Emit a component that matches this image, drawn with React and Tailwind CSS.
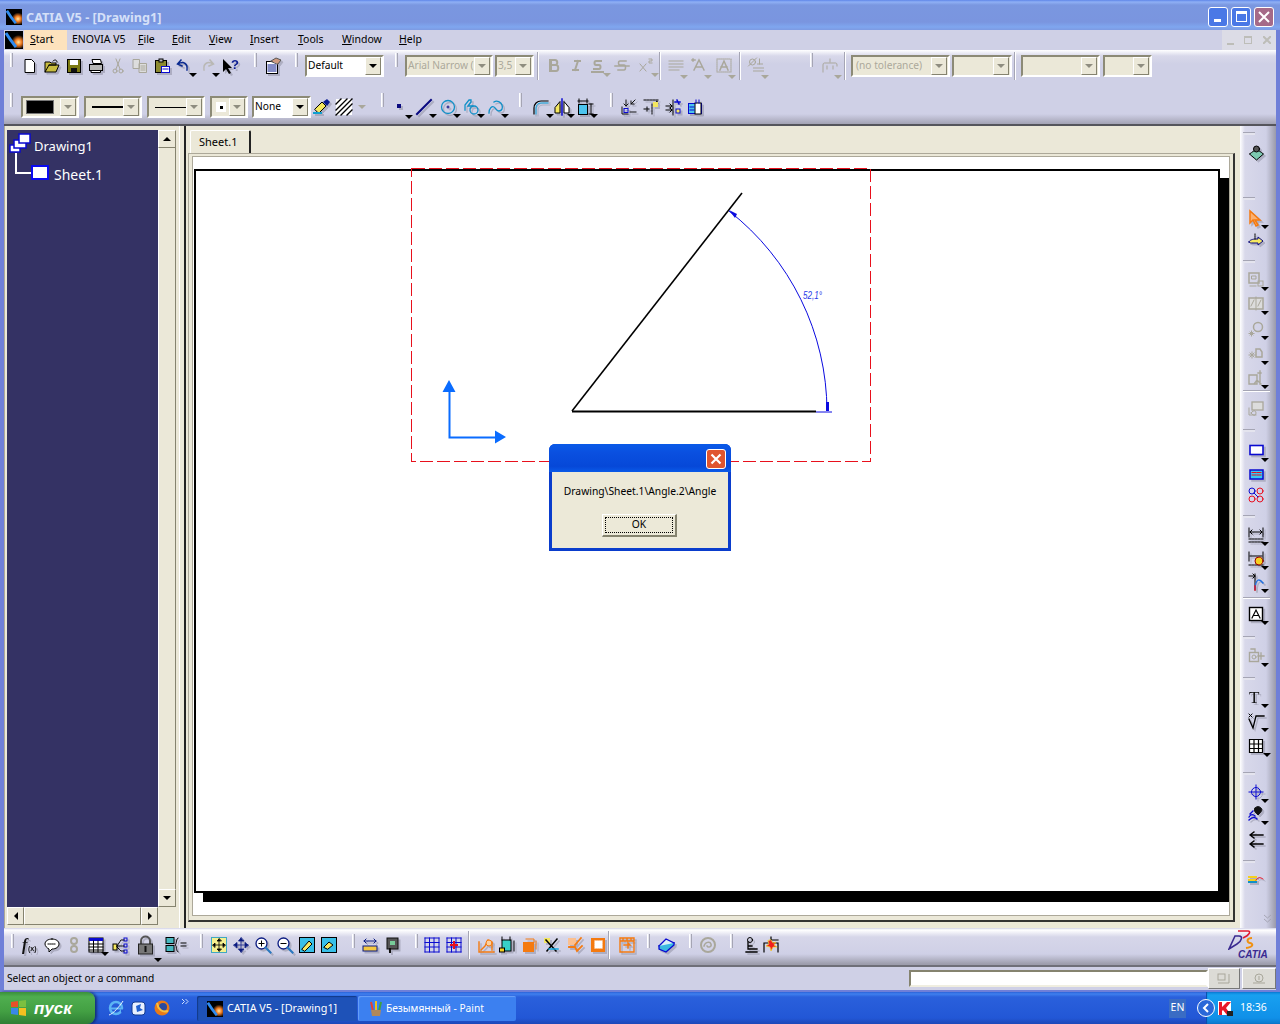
import React from 'react'

const G = '#a9a79b'
const B = '#0a0ad0'
const O = '#f47a10'

// toolbar slot, the svg inside is drawn on a 16x16 grid
const Tool = ({ className = 'w-[16px]', arrow, arrowClass = '-right-[5px] -bottom-[3px]', vb = '0 0 16 16', flat, dim, children }) => (
  <div className={`relative shrink-0 h-[16px] ${className}`}>
    <svg viewBox={vb} className={`w-full h-full overflow-visible ${flat ? '' : 'drop-shadow-[2px_2px_0_rgba(110,110,125,0.35)]'}`} fill="none" strokeLinecap="square">
      {children}
    </svg>
    {arrow && <Arrow className={`absolute ${arrowClass} ${dim ? 'border-t-[#a9a79b]' : 'border-t-black'}`} />}
  </div>
)

const Arrow = ({ className = '' }) => (
  <span className={`block w-0 h-0 border-x-[4px] border-x-transparent border-t-[4px] ${className}`} />
)

const Grip = ({ className = 'mb-[12px]' }) => (
  <div className={`shrink-0 w-[3px] h-[14px] bg-[#e4e4ee] border-x border-x-white border-r-[#a5a5b4] ${className}`} />
)
const Sep = ({ className = '' }) => (
  <div className={`shrink-0 w-[2px] h-[28px] bg-white border-l border-[#a5a5b4] ${className}`} />
)
const HGrip = ({ className = '' }) => (
  <div className={`shrink-0 -ml-[5px] w-[12px] h-[3px] bg-[#e4e4ee] border-t border-[#a5a5b4] ${className}`} />
)

const Combo = ({ className = '', white, dim, text, children }) => (
  <div className={`shrink-0 h-[22px] flex items-center border-2 border-[#8c8a76] border-r-white border-b-white ${white ? 'bg-white' : 'bg-[#ebe8d8]'} ${className}`}>
    <div className={`flex-1 min-w-0 flex items-center overflow-hidden whitespace-nowrap pl-[1px] text-[10.2px] ${dim ? 'text-[#aba99b]' : 'text-black'}`}>
      {text}{children}
    </div>
    <div className="shrink-0 w-[16px] h-[18px] mr-[1px] flex items-center justify-center bg-[#ebe8d8] border border-white border-r-[#85836f] border-b-[#85836f]">
      <Arrow className={dim ? 'border-t-[#8f8d80]' : 'border-t-black'} />
    </div>
  </div>
)

const Logo = ({ className = '' }) => (
  <svg viewBox="0 0 18 18" className={className}>
    <defs>
      <radialGradient id="comet" cx="0.65" cy="0.55" r="0.55">
        <stop offset="0" stopColor="#ffe9a0" />
        <stop offset="0.45" stopColor="#f07a20" />
        <stop offset="1" stopColor="#000" />
      </radialGradient>
    </defs>
    <rect width="18" height="18" fill="#000" />
    <rect x="5" y="4" width="13" height="13" fill="url(#comet)" />
    <path d="M1 2C4 7 7 11 11 16" stroke="#2f8cf0" strokeWidth="3" fill="none" />
  </svg>
)

const MenuItem = ({ className, u, rest }) => (
  <div className={`shrink-0 text-[10.5px] text-black ${className}`}>
    <span className="underline">{u}</span>{rest}
  </div>
)

function TitleBar() {
  return (
    <div className="h-[30px] shrink-0 pt-[3px] flex items-center bg-[linear-gradient(#5f86e8_0,#8fb0f5_2px,#7a97e0_5px,#7a95df_22px,#7fa6ef_27px,#7d9ae2_30px)]">
      <Logo className="ml-[6px] mt-[1px] w-[16px] h-[16px]" />
      <div className="ml-[4px] mt-[2px] text-[12.7px] font-bold text-[#d5e0f8]">CATIA V5 - [Drawing1]</div>
      <div className="ml-auto mr-[6px] flex gap-[3px]">
        <div className="w-[20px] h-[20px] rounded-[3px] border border-white bg-[#4a78e6] flex items-end pb-[4px] pl-[5px]">
          <div className="w-[7px] h-[3px] bg-white" />
        </div>
        <div className="w-[20px] h-[20px] rounded-[3px] border border-white bg-[#4a78e6] flex items-center justify-center">
          <div className="w-[11px] h-[11px] border border-white border-t-[3px]" />
        </div>
        <div className="w-[20px] h-[20px] rounded-[3px] border border-white bg-[#a56a88] flex items-center justify-center">
          <svg viewBox="0 0 12 12" className="w-[12px] h-[12px]"><path d="M1 1l10 10M11 1L1 11" stroke="#fff" strokeWidth="2" /></svg>
        </div>
      </div>
    </div>
  )
}

function MenuBar() {
  return (
    <div className="h-[20px] shrink-0 flex items-center bg-[#cfd0e6]">
      <Logo className="ml-[1px] w-[18px] h-[18px]" />
      <div className="ml-[1px] w-[43px] h-full flex items-center pl-[6px] bg-[#fde2bd] text-[10.5px]">
        <span><span className="underline">S</span>tart</span>
      </div>
      <div className="shrink-0 ml-[5px] w-[66px] text-[10.5px]">ENOVIA V5</div>
      <MenuItem className="w-[34px]" u="F" rest="ile" />
      <MenuItem className="w-[37px]" u="E" rest="dit" />
      <MenuItem className="w-[41px]" u="V" rest="iew" />
      <MenuItem className="w-[48px]" u="I" rest="nsert" />
      <MenuItem className="w-[44px]" u="T" rest="ools" />
      <MenuItem className="w-[57px]" u="W" rest="indow" />
      <MenuItem className="w-[40px]" u="H" rest="elp" />
      <div className="ml-auto h-full w-[54px] flex items-center justify-around bg-[#dcdce6] text-[#bdbdb8]">
        <div className="w-[7px] h-[2px] mt-[7px] bg-[#bdbdb8]" />
        <div className="w-[8px] h-[8px] border border-[#bdbdb8] border-t-2" />
        <svg viewBox="0 0 8 8" className="w-[8px] h-[8px]"><path d="M0 0l8 8M8 0L0 8" stroke="#bdbdb8" strokeWidth="2" /></svg>
      </div>
    </div>
  )
}

function ToolRowOne() {
  return (
    <div className="h-[32px] flex items-center">
      <Grip className="ml-[6px] mb-[12px]" />
      <Tool className="ml-[9px] w-[16px]"><path d="M3.5 1.5h6l3 3v10h-9z" fill="#fff" stroke="#000" /></Tool>
      <Tool className="ml-[6px] w-[16px]"><path d="M1 14V4h5l1 1h5v2H5L1 14h11l3-7H5" fill="#c8bd40" stroke="#000" /><path d="M9 3c2-2 4-1 4 1" stroke="#000" /></Tool>
      <Tool className="ml-[6px] w-[16px]"><rect x="1.5" y="1.5" width="13" height="13" fill="#7c7a12" stroke="#000" /><rect x="4" y="2" width="8" height="5" fill="#fff" /><rect x="5" y="10" width="6" height="4" fill="#111" /></Tool>
      <Tool className="ml-[6px] w-[16px]"><path d="M4.5 1.5h8l1 4h-8z" fill="#fff" stroke="#000" /><rect x="1.5" y="6.5" width="13" height="6" fill="#b8b8b8" stroke="#000" /><path d="M3.5 12.5h9v2h-9z" fill="#fff" stroke="#000" /></Tool>
      <Tool flat className="ml-[6px] w-[16px]"><circle cx="5" cy="13" r="2" stroke={G} /><circle cx="11" cy="13" r="2" stroke={G} /><path d="M6 11L10 1M10 11L6 1" stroke={G} /></Tool>
      <Tool flat className="ml-[6px] w-[16px]"><path d="M1.5 1.5h6v9h-6zM7.5 5.5h7v9h-7z" fill="#ddd" stroke={G} /><path d="M9 8h4M9 10h4M9 12h4" stroke={G} /></Tool>
      <Tool className="ml-[6px] w-[16px]"><rect x="1.5" y="2.5" width="11" height="12" fill="#8c8a30" stroke="#000" /><rect x="5" y="1" width="4" height="3" fill="#bbb" stroke="#000" /><rect x="7.5" y="8.5" width="8" height="6" fill="#fff" stroke={B} /><path d="M9 11h5" stroke={B} /></Tool>
      <Tool arrow className="ml-[6px] w-[16px]"><path d="M5 2L1.5 6 6 8M2 6c5-3 10-1 9 6" stroke="#0a2a90" strokeWidth="1.5" /></Tool>
      <Tool arrow flat className="ml-[7px] w-[16px]"><path d="M11 2l3.5 4L10 8M14 6C9 3 4 5 5 12" stroke="#b9b8b4" strokeWidth="1.5" /></Tool>
      <Tool className="ml-[7px] w-[18px]" vb="0 0 18 16">
        <path d="M1 1v13l3-3 3 5 2-1-3-5h4z" fill="#000" />
        <text x="9" y="11" fontSize="13" fontWeight="700" fill="#0a1a90" fontFamily="Liberation Sans, sans-serif">?</text>
      </Tool>
      <Grip className="ml-[14px] mb-[12px]" />
      <Tool className="ml-[8px] w-[17px]" vb="0 0 17 16"><rect x="1.5" y="3.5" width="11" height="12" fill="#fff" stroke="#000" /><path d="M3 7h8M3 9h8M3 11h8M3 13h8" stroke="#0a1a90" /><path d="M6 3l5-3 5 2-3 4z" fill="#d09a80" stroke="#555" /></Tool>
      <Grip className="ml-[13px] mb-[12px]" />
      <Combo white className="ml-[7px] w-[79px]" text="Default" />
      <Grip className="ml-[11px] mb-[12px]" />
      <Combo dim className="ml-[7px] w-[88px]" text="Arial Narrow (" />
      <Combo dim className="ml-[2px] w-[39px]" text="3,5" />
      <Sep className="ml-[3px]" />
      <Tool flat className="ml-[7px] w-[16px]"><path d="M4 2h5c3 0 3 5 0 5H4zM4 7h6c3 0 3 6 0 6H4zM5 2v11" stroke={G} strokeWidth="2" /></Tool>
      <Tool flat className="ml-[6px] w-[16px]"><path d="M7 3h5M5 12h5M10 3L7 12" stroke={G} strokeWidth="2" /></Tool>
      <Tool flat arrow dim className="ml-[6px] w-[16px]"><path d="M11 3H6C4 3 4 7 6 7h3c2 0 2 4 0 4H4M2 14h11" stroke={G} strokeWidth="2" /></Tool>
      <Tool flat className="ml-[8px] w-[16px]"><path d="M12 3H6C4 3 4 7 6 7h4c2 0 2 5 0 5H4M1 8h14" stroke={G} strokeWidth="1.5" /></Tool>
      <Tool flat arrow dim className="ml-[8px] w-[16px]"><path d="M2 6l6 7M8 6l-6 7M11 1h3v2h-3v2h3" stroke={G} /></Tool>
      <Sep className="ml-[5px]" />
      <Tool flat arrow dim arrowClass="right-[-4px] bottom-[-5px]" className="ml-[7px] w-[16px]"><path d="M1 3h14M1 6h14M1 9h14M1 12h10" stroke={G} /></Tool>
      <Tool flat arrow dim arrowClass="right-[-4px] bottom-[-5px]" className="ml-[8px] w-[16px]"><path d="M2 12L7 2l5 10M4 9h6M0 2h3M1 1v2" stroke={G} strokeWidth="1.5" /></Tool>
      <Tool flat arrow dim arrowClass="right-[-4px] bottom-[-5px]" className="ml-[8px] w-[16px]"><rect x="1" y="1" width="14" height="13" stroke={G} strokeDasharray="1 1" /><path d="M4 12L8 3l4 9M5 9h6" stroke={G} strokeWidth="1.5" /></Tool>
      <Sep className="ml-[7px]" />
      <Tool flat arrow dim arrowClass="right-[-4px] bottom-[-5px]" className="ml-[7px] w-[17px]"><circle cx="4" cy="4" r="3" stroke={G} /><path d="M0 8L8 0M11 1v5M9 6h5M5 10h10M5 13h10" stroke={G} /></Tool>
      <Grip className="ml-[45px] mb-[12px]" />
      <Tool flat arrow dim arrowClass="right-[-4px] bottom-[-5px]" className="ml-[9px] w-[16px]"><path d="M1 14V7c0-2 1-2 2-2h10c1 0 2 0 2 2v1M5 8v3M11 8v3M8 1v3" stroke={G} /></Tool>
      <Sep className="ml-[6px]" />
      <Combo dim className="ml-[5px] w-[99px] pl-[2px]" text="(no tolerance)" />
      <Combo dim className="ml-[2px] w-[60px]" />
      <Sep className="ml-[2px]" />
      <Combo dim className="ml-[5px] w-[79px]" />
      <Combo dim className="ml-[3px] w-[49px]" />
    </div>
  )
}

function ToolRowTwo() {
  return (
    <div className="h-[30px] mt-[10px] flex items-center">
      <Grip className="ml-[6px] mb-[14px]" />
      <Combo dim className="ml-[8px] w-[58px]"><div className="ml-[2px] w-[28px] h-[14px] bg-black border border-[#777]" /></Combo>
      <Combo dim className="ml-[5px] w-[58px]"><div className="ml-[5px] w-[33px] h-[2px] bg-black" /></Combo>
      <Combo dim className="ml-[5px] w-[58px]"><div className="ml-[5px] w-[33px] h-px bg-black" /></Combo>
      <Combo dim className="ml-[5px] w-[38px]"><div className="ml-[3px] w-[10px] h-[10px] bg-white flex items-center justify-center"><div className="w-[3px] h-[3px] bg-black" /></div></Combo>
      <Combo white className="ml-[4px] w-[59px]" text="None" />
      <Tool className="ml-[3px] w-[17px]" vb="0 0 17 16"><path d="M1 10l7-7 4 4-7 7z" fill="#f5e860" stroke="#000" /><path d="M9 3l4-3 3 3-3 4z" fill="#0a1a90" /><path d="M0 14h7" stroke="#10a0d0" strokeWidth="2" /></Tool>
      <Tool flat className="ml-[5px] w-[16px]"><rect width="16" height="16" fill="#fff" /><path d="M0 5L5 0M0 11L11 0M0 16L16 0M5 16L16 5M11 16l5-5" stroke="#000" strokeWidth="1.3" /></Tool>
      <Arrow className="ml-[6px] shrink-0 border-t-[#a9a79b]" />
      <Grip className="ml-[15px] mb-[14px]" />
      <Tool arrow arrowClass="-right-[3px] -bottom-[4px]" className="ml-[10px] w-[16px]"><rect x="3" y="5" width="4" height="4" fill="#0a0a80" /></Tool>
      <Tool arrow className="ml-[6px] w-[16px]"><path d="M1 15L15 1" stroke="#0a0a80" strokeWidth="2" /></Tool>
      <Tool arrow className="ml-[8px] w-[16px]"><circle cx="8" cy="8" r="6.5" stroke="#1090c8" strokeWidth="1.3" /><path d="M7 8h2M8 7v2" stroke="#0a0a80" /></Tool>
      <Tool arrow className="ml-[8px] w-[16px]"><path d="M1 11V6l4-5h2v2L4 7h5" stroke="#1090c8" strokeWidth="1.3" /><circle cx="10" cy="11" r="4" stroke="#1090c8" strokeWidth="1.3" /></Tool>
      <Tool arrow className="ml-[8px] w-[16px]"><path d="M1 14c0-5 3-7 5-6s2 4 5 4 4-3 3-6-5-5-8-3" stroke="#1090c8" strokeWidth="1.3" /></Tool>
      <Grip className="ml-[15px] mb-[14px]" />
      <Tool arrow className="ml-[11px] w-[16px]"><path d="M1 15V9c0-4 3-7 7-7h7" stroke="#000" strokeWidth="1.2" /><path d="M3 15V9c0-3 2-5 5-5h7" stroke="#10a8e0" /></Tool>
      <Tool arrow className="ml-[5px] w-[16px]"><path d="M6 3v11H1V9z" fill="#f5e860" stroke="#000" /><path d="M10 3v11h5V9z" fill="#fff" stroke="#000" /><path d="M8 0v16" stroke={B} strokeWidth="1.5" /></Tool>
      <Tool arrow className="ml-[7px] w-[16px]"><rect x="1.5" y="5.5" width="9" height="10" fill="#4cc4ee" stroke="#000" /><path d="M1 2h10M2 0v4M10 0v4M14 5v10M12 5h4M12 15h4" stroke="#000" /></Tool>
      <Grip className="ml-[17px] mb-[14px]" />
      <Tool className="ml-[8px] w-[16px]"><path d="M1 8v7h6M5 1v6M3 5l2 2 2-2M14 1l-4 4M10 2v3h3M9 13h6" stroke="#111" /><rect x="3" y="9.5" width="4" height="4" stroke={B} /></Tool>
      <Tool className="ml-[6px] w-[16px]"><path d="M1 1h14M1 10h5M4 8v4M9 5v10M12 4l2-2 1 3" stroke="#000" strokeDasharray="2 1" /><rect x="10" y="3" width="5" height="5" fill="#f5e860" /></Tool>
      <Tool className="ml-[6px] w-[16px]"><path d="M1 7h6M1 11h6M5 5l2 2-2 2M5 9l2 2-2 2M8 1v15" stroke="#000" /><path d="M10 3h5M12 1l2 4" stroke={B} strokeWidth="1.5" /><rect x="11" y="10" width="4" height="4" fill="#f5e860" stroke={B} /></Tool>
      <Tool className="ml-[6px] w-[16px]"><rect x="1.5" y="4.5" width="13" height="10" fill="#4cc4ee" stroke={B} /><rect x="8" y="4" width="6" height="11" fill="#fff" stroke="#000" /><path d="M9 1v3M12 1v3M3 8h4M3 11h4" stroke={B} /></Tool>
    </div>
  )
}

function TreePanel() {
  return (
    <div className="w-[175px] shrink-0 pt-[4px] pl-[2px] bg-[#ebe8d8] border-l border-[#aca899]">
      <div className="flex">
        <div className="w-[151px] h-[777px] bg-[#343264] pt-[3px] overflow-hidden text-white">
          <div className="flex items-center h-[20px]">
            <svg viewBox="0 0 22 20" className="ml-[2px] w-[22px] h-[20px]">
              <rect x="1" y="12" width="10" height="7" fill="#fff" stroke={B} strokeWidth="1.5" />
              <rect x="5" y="7" width="12" height="8" fill="#fff" stroke={B} strokeWidth="1.5" />
              <rect x="10" y="1" width="11" height="9" fill="#fff" stroke={B} strokeWidth="1.5" />
            </svg>
            <span className="ml-[3px] mt-[7px] text-[13px] leading-none">Drawing1</span>
          </div>
          <div className="flex items-end h-[27px]">
            <div className="ml-[8px] mb-[6px] w-[16px] h-[21px] border-l-2 border-b-2 border-white" />
            <div className="mb-[0px] w-[18px] h-[15px] bg-white border-2 border-[#0a0af0]" />
            <span className="ml-[5px] mb-[-2px] text-[14px] leading-none">Sheet.1</span>
          </div>
        </div>
        <div className="w-[18px] h-[777px] flex flex-col bg-[#ebe8d8]">
          <div className="h-[18px] flex items-center justify-center border border-white border-r-[#85836f] border-b-[#85836f]"><Arrow className="rotate-180 border-t-black" /></div>
          <div className="flex-1 border-x border-white border-r-[#85836f]" />
          <div className="h-[18px] flex items-center justify-center border border-white border-r-[#85836f] border-b-[#85836f]"><Arrow className="border-t-black" /></div>
        </div>
      </div>
      <div className="w-[151px] h-[18px] flex bg-[#ebe8d8]">
        <div className="w-[17px] flex items-center justify-center border border-white border-r-[#85836f] border-b-[#85836f]"><Arrow className="rotate-90 border-t-black" /></div>
        <div className="flex-1 border border-white border-r-[#85836f] border-b-[#85836f]" />
        <div className="w-[17px] flex items-center justify-center border border-white border-r-[#85836f] border-b-[#85836f]"><Arrow className="-rotate-90 border-t-black" /></div>
      </div>
    </div>
  )
}

function Drawing() {
  return (
    <svg viewBox="193 157 1037 760" className="absolute left-0 top-0 w-[1037px] h-[760px] pointer-events-none">
      <rect x="411.5" y="168.5" width="459" height="293" fill="none" stroke="#e8101c" strokeDasharray="13 4" shapeRendering="crispEdges" />
      <path d="M572 411L742 193" stroke="#000" strokeWidth="1.6" />
      <path d="M572 411.5H816" stroke="#000" strokeWidth="2" />
      <path d="M816 412H832" stroke="#0a0ae0" />
      <path d="M827 411A255 255 0 0 0 729 211" fill="none" stroke="#0a0ae0" />
      <path d="M826 402h3v9h-3zM729 210l8 4-2 4z" fill="#0a0ae0" />
      <text x="803" y="299" fontSize="10" fontStyle="italic" fill="#2a3ae8" textLength="19" lengthAdjust="spacingAndGlyphs" fontFamily="Liberation Sans, sans-serif">52,1°</text>
      <path d="M449.5 391V437.5H496" fill="none" stroke="#0a6cff" strokeWidth="2" />
      <path d="M449 380l6.5 12h-13zM506 437l-11-6.5v13z" fill="#0a6cff" />
    </svg>
  )
}

function Dialog() {
  return (
    <div className="absolute left-[356px] top-[287px] w-[182px] h-[107px] flex flex-col rounded-t-[6px] bg-[#0a3fd0] border-x-[3px] border-b-[3px] border-[#0a3dcc]">
      <div className="h-[28px] shrink-0 -mx-[3px] pt-[2px] rounded-t-[6px] flex items-center justify-end pr-[5px] bg-[linear-gradient(#0a5ae8,#0a50e0_30%,#0648d8_80%,#0a5ae8)]">
        <div className="w-[20px] h-[20px] rounded-[3px] border border-white bg-[#e0552f] flex items-center justify-center">
          <svg viewBox="0 0 12 12" className="w-[12px] h-[12px]"><path d="M1.5 1.5l9 9M10.5 1.5l-9 9" stroke="#fff" strokeWidth="2.2" /></svg>
        </div>
      </div>
      <div className="flex-1 bg-[#ece9d8] flex flex-col items-center">
        <div className="mt-[11px] h-[16px] leading-[16px] text-[10.3px] text-black whitespace-nowrap">Drawing\Sheet.1\Angle.2\Angle</div>
        <div className="mt-[15px] ml-[-1px] w-[75px] h-[23px] p-[2px] bg-[#ece9d8] border border-white border-r-2 border-b-2 border-r-[#85836f] border-b-[#85836f]">
          <div className="w-full h-full border border-dotted border-black flex items-center justify-center text-[10.3px]">OK</div>
        </div>
      </div>
    </div>
  )
}

function SheetArea() {
  return (
    <div className="w-[1052px] shrink-0 flex flex-col bg-[#ebe8d8]">
      <div className="h-[27px] shrink-0 pl-[4px] pt-[4px] flex">
        <div className="w-[61px] h-[23px] rounded-t-[2px] border-t border-l border-white border-r-2 border-r-[#222] flex items-center pl-[8px] text-[11px]">Sheet.1</div>
      </div>
      <div className="ml-[2px] w-[1047px] h-[769px] shrink-0 border-t border-l border-[#aca899] border-r-2 border-r-[#333] border-b-2 border-b-[#333] pt-[2px] pl-[3px] pr-[4px]">
        <div className="relative w-[1038px] h-[760px] bg-white border border-[#aca899] overflow-hidden">
          <div className="ml-[1px] mt-[12px] w-[1026px] h-[724px] bg-white border-2 border-black shadow-[9px_9px_0_#000]" />
          <Drawing />
          <Dialog />
        </div>
      </div>
    </div>
  )
}

function RightBar() {
  return (
    <div className="w-[36px] shrink-0 ml-[2px] flex flex-col pl-[8px] bg-[linear-gradient(90deg,#ffffff_0,#d8d8ea_5px,#cfd0e6_26px,#9a9aaa_36px)]">
      <HGrip className="mt-[6px]" />
      <Tool className="mt-[10px] w-[17px]"><path d="M1 9l7-5 7 5-7 6z" fill="#7cc8b0" stroke="#000" strokeDasharray="2 1" /><circle cx="8" cy="4" r="3" fill="#555" stroke="#000" /></Tool>
      <HGrip className="mt-[36px]" />
      <Tool arrow className="mt-[10px] w-[16px]"><path d="M2 1v12l3-3 3 6 2-1-3-5h5z" fill="#fbb070" stroke={O} strokeWidth="1.5" /></Tool>
      <Tool className="mt-[7px] w-[16px]"><path d="M1 9c0-2 4-3 7-3h2V4l5 4-5 4v-2H5c-2 0-4 0-4-1z" fill="#f5e860" stroke="#0a0a80" /><path d="M7 1v6" stroke="#000" strokeDasharray="1 1" /></Tool>
      <HGrip className="mt-[11px]" />
      <Tool flat arrow className="mt-[9px] w-[16px]"><rect x="1" y="1" width="10" height="10" stroke={G} strokeWidth="1.5" /><rect x="10" y="9" width="5" height="5" stroke={G} /><path d="M4 4h4v3H4zM2 14h6" stroke={G} /></Tool>
      <Tool flat arrow className="mt-[8px] w-[16px]"><rect x="1" y="2" width="14" height="11" fill="#dcdcdc" stroke={G} strokeWidth="1.5" /><path d="M8 1v13M3 10l3-6M10 10l3-6" stroke={G} /></Tool>
      <Tool flat arrow className="mt-[9px] w-[16px]"><circle cx="10" cy="6" r="4.5" stroke={G} strokeWidth="1.5" /><path d="M2 11l3 3M5 11l-3 3M1 12.5h5M3.5 10v5" stroke={G} /></Tool>
      <Tool flat arrow className="mt-[9px] w-[16px]"><path d="M8 3h4l2 3v5H8z" stroke={G} strokeWidth="1.5" /><path d="M2 7l4 4M6 7l-4 4M1 9h6M4 6v6" stroke={G} /></Tool>
      <Tool flat arrow className="mt-[8px] w-[16px]"><path d="M1 5h8v9H1zM12 1v13M10 3h4M6 14l3-4 4 4" stroke={G} strokeWidth="1.4" strokeDasharray="3 1" /></Tool>
      <div className="mt-[4px] w-[27px] h-[2px] -ml-[5px] shrink-0 bg-white border-t border-[#a5a5b4]" />
      <Tool flat arrow className="mt-[9px] w-[16px]"><rect x="4" y="1" width="11" height="8" fill="#dcdcdc" stroke={G} strokeWidth="1.3" /><path d="M1 7v7h7M3 12c2-3 5-3 5 0s-3 3-5 0" stroke={G} /></Tool>
      <HGrip className="mt-[12px]" />
      <Tool arrow className="mt-[11px] w-[16px]"><rect x="2" y="2.5" width="13" height="9" fill="#fff" stroke={B} strokeWidth="1.6" /></Tool>
      <Tool className="mt-[8px] w-[16px]"><rect x="2" y="3" width="13" height="9" fill="#38c8f0" stroke={B} strokeWidth="1.5" /><path d="M4 5.5h9M4 8h9" stroke="#e81020" strokeDasharray="1.5 1" /></Tool>
      <Tool flat className="mt-[4px] w-[16px]"><circle cx="4" cy="4" r="3" stroke={B} /><circle cx="12" cy="4" r="3" stroke="#e81020" /><circle cx="4" cy="12" r="3" stroke="#e81020" /><circle cx="12" cy="12" r="3" stroke="#e81020" /><path d="M6 6l4 4" stroke={B} /></Tool>
      <HGrip className="mt-[12px]" />
      <Tool arrow className="mt-[9px] w-[16px]"><path d="M1 1v9M15 1v9M2 5h12M4 3L2 5l2 2M12 3l2 2-2 2" stroke="#000" /><path d="M1 12h14M1 15h14" stroke="#000" strokeDasharray="2 1" /></Tool>
      <Tool arrow className="mt-[8px] w-[16px]"><path d="M1 1v9M15 1v9M2 5h12" stroke="#000" /><path d="M1 14h14" stroke="#000" strokeDasharray="2 1" /><circle cx="11" cy="10" r="4" fill="#f5d020" stroke="#900" /></Tool>
      <Tool arrow className="mt-[7px] w-[16px]"><path d="M1 2h6M5 0l2 2-2 2M7 0v16" stroke="#000" /><path d="M7 14c1-9 4-10 8-5" stroke="#2070e0" strokeWidth="1.4" /><path d="M7 12v4" stroke="#e81020" strokeWidth="1.4" /></Tool>
      <div className="mt-[7px] w-[27px] h-[2px] -ml-[5px] shrink-0 bg-white border-t border-[#a5a5b4]" />
      <Tool arrow className="mt-[7px] w-[16px]"><rect x="1.5" y="1.5" width="13" height="13" fill="#fff" stroke="#000" strokeWidth="1.4" /><path d="M4 12L8 4l4 8M5.5 9.5h5" stroke="#000" strokeWidth="1.2" /></Tool>
      <HGrip className="mt-[14px]" />
      <Tool flat arrow className="mt-[9px] w-[16px]"><rect x="1.5" y="4.5" width="9" height="9" stroke={G} strokeWidth="1.4" /><circle cx="6" cy="9" r="2" stroke={G} /><path d="M3 1h4v3M10 8h6M13 5v6" stroke={G} strokeWidth="1.3" /></Tool>
      <HGrip className="mt-[13px]" />
      <Tool arrow className="mt-[9px] w-[16px]"><text x="1" y="14" fontSize="17" fontWeight="400" fill="#111" fontFamily="Liberation Serif, serif">T</text></Tool>
      <Tool arrow className="mt-[8px] w-[16px]"><path d="M1 6l4 9 3-12h8" stroke="#000" strokeWidth="1.3" /><path d="M1 1l3 3M4 1L1 4" stroke="#000" /></Tool>
      <Tool arrow arrowClass="-right-[7px] -bottom-[3px]" className="mt-[9px] w-[16px]"><path d="M1.5 1.5h13v13h-13zM1.5 6h13M1.5 10.5h13M6 1.5v13M10.5 1.5v13" stroke="#000" strokeWidth="1.2" fill="#fff" /></Tool>
      <HGrip className="mt-[18px]" />
      <Tool arrow className="mt-[9px] w-[16px]"><circle cx="8" cy="8" r="4.5" stroke={B} /><path d="M8 1v14M1 8h14" stroke={B} /></Tool>
      <Tool arrow className="mt-[6px] w-[16px]"><path d="M7 2c2-2 4-2 6 0s0 4-3 7C8 7 5 5 7 2z" fill="#111" stroke="#111" /><path d="M1 11c2-3 4-3 6-1M1 14c3-3 6-3 8-1M2 8l3-3" stroke={B} strokeWidth="1.3" /></Tool>
      <Tool className="mt-[10px] w-[16px]"><path d="M15 3H3M6 0L2 3l4 3M15 12H3M6 9l-4 3 4 3" stroke="#000" strokeWidth="1.3" /></Tool>
      <HGrip className="mt-[12px]" />
      <Tool className="mt-[9px] w-[16px]"><path d="M1 5h7M1 8h7" stroke="#f5d020" strokeWidth="2" /><path d="M1 10h7" stroke="#1090c8" strokeWidth="2" /><path d="M8 8c2-3 4-3 7-1" stroke="#e81020" /></Tool>
      <svg viewBox="0 0 9 9" className="mt-[26px] ml-[15px] w-[9px] h-[9px] shrink-0" fill="none"><path d="M1 1l3.5 3L8 1M1 5l3.5 3L8 5" stroke="#a5a5b4" /></svg>
    </div>
  )
}

function BottomTools() {
  return (
    <div className="h-[37px] shrink-0 pb-[3px] flex items-center bg-[linear-gradient(#cfd0e6_0,#fff_2px,#d6d6e9_9px,#cfd0e6_26px,#9d9dac_36px)]">
      <Grip className="ml-[7px] mb-[8px]" />
      <Tool className="ml-[8px] w-[16px]"><text x="0" y="13" fontSize="16" fontWeight="700" fontStyle="italic" fontFamily="Liberation Serif, serif" fill="#111">f</text><text x="6" y="14" fontSize="7" fontWeight="700" fontFamily="Liberation Sans, sans-serif" fill="#111">(x)</text></Tool>
      <Tool className="ml-[6px] w-[16px]"><path d="M8 2c4 0 7 2 7 5s-3 5-7 5l-3 3v-3C3 11 1 9 1 7c0-3 3-5 7-5z" fill="#fff" stroke="#000" /><path d="M4 7h8" stroke="#000" strokeDasharray="1 1" /></Tool>
      <Tool flat className="ml-[6px] w-[16px]"><circle cx="8" cy="4" r="3" stroke={G} strokeWidth="2" /><circle cx="8" cy="12" r="3" stroke={G} strokeWidth="2" /></Tool>
      <Tool arrow className="ml-[6px] w-[16px]"><rect x="1" y="1" width="14" height="14" fill="#fff" stroke="#000" /><rect x="1" y="1" width="14" height="3" fill="#0a0ad0" /><path d="M1 7h14M1 10h14M1 13h14M5.5 4v11M10 4v11" stroke="#000" /></Tool>
      <Tool className="ml-[8px] w-[16px]"><rect x="1" y="7" width="4" height="6" fill="#f5e860" stroke="#000" /><rect x="12" y="1" width="3" height="3" stroke={B} /><rect x="12" y="7" width="3" height="3" stroke={B} /><rect x="12" y="13" width="3" height="3" stroke={B} /><path d="M5 9l4-6h3M5 9h7M5 10l4 4h3" stroke="#000" strokeDasharray="1 1" /></Tool>
      <Tool arrow arrowClass="-right-[8px] -bottom-[7px]" className="ml-[9px] w-[17px] h-[20px]" vb="0 0 17 20"><path d="M4 9V6c0-6 9-6 9 0v3" stroke="#555" strokeWidth="2" /><rect x="1.5" y="9" width="14" height="10" fill="#777" stroke="#222" /><path d="M8.5 12v4" stroke="#111" strokeWidth="2" /></Tool>
      <Tool className="ml-[11px] w-[22px]" vb="0 0 22 16"><rect x="1" y="0.5" width="8" height="6" fill="#48b8c0" stroke="#000" /><rect x="1" y="8.5" width="8" height="6" fill="#48b8c0" stroke="#000" /><path d="M13 1c-2 0-1 6-3 7 2 0 1 7 3 7" stroke="#000" /><path d="M16 6h5M16 9h5" stroke="#000" /></Tool>
      <Grip className="ml-[13px] mb-[8px]" />
      <Tool flat className="ml-[8px] w-[16px]"><rect x="0.5" y="0.5" width="15" height="15" fill="#f5f090" stroke="#40a8c0" /><path d="M8 2v12M2 8h12M8 2L6 4h4zM8 14l-2-2h4zM2 8l2-2v4zM14 8l-2-2v4z" stroke="#000" fill="#000" strokeWidth="0.8" /></Tool>
      <Tool className="ml-[6px] w-[16px]"><path d="M8 1v14M1 8h14M8 1L5.5 4h5zM8 15l-2.5-3h5zM1 8l3-2.5v5zM15 8l-3-2.5v5z" stroke="#0a1a80" fill="#0a1a80" strokeWidth="0.8" /></Tool>
      <Tool className="ml-[6px] w-[16px]"><circle cx="6.5" cy="6.5" r="5.5" fill="#fff" stroke="#0a1a80" strokeWidth="1.3" /><path d="M4 6.5h5M6.5 4v5" stroke="#000" /><path d="M10.5 10.5l5 5" stroke="#2878c0" strokeWidth="2" /></Tool>
      <Tool className="ml-[6px] w-[16px]"><circle cx="6.5" cy="6.5" r="5.5" fill="#fff" stroke="#0a1a80" strokeWidth="1.3" /><path d="M4 6.5h5" stroke="#000" /><path d="M10.5 10.5l5 5" stroke="#2878c0" strokeWidth="2" /></Tool>
      <Tool flat className="ml-[6px] w-[16px]"><rect x="0.5" y="0.5" width="15" height="15" fill="#38c0e8" stroke="#000" /><path d="M3 12l7-8 3 3-7 7z" fill="#f5e860" stroke="#000" /></Tool>
      <Tool flat className="ml-[6px] w-[16px]"><rect x="0.5" y="0.5" width="15" height="15" fill="#38c0e8" stroke="#000" /><path d="M3 10l5-5 4 3-5 4z" fill="#f5e860" stroke="#000" /></Tool>
      <Grip className="ml-[15px] mb-[8px]" />
      <Tool className="ml-[7px] w-[16px]"><path d="M2 4h12M4 2L2 4l2 2M12 2l2 2-2 2" stroke="#0a1a80" /><rect x="1" y="9" width="14" height="5" fill="#f5c840" stroke="#0a1a80" /></Tool>
      <Tool className="ml-[6px] w-[16px]"><rect x="3" y="1" width="11" height="11" fill="#555" stroke="#111" /><rect x="6" y="4" width="5" height="4" fill="#7c9" /><path d="M6 12v3" stroke="#111" strokeWidth="2" /></Tool>
      <Grip className="ml-[15px] mb-[8px]" />
      <Tool flat className="ml-[6px] w-[16px]"><path d="M1 1v14M5.5 1v14M10 1v14M15 1v14M1 1h14M1 5.5h14M1 10h14M1 15h14" stroke={B} /></Tool>
      <Tool flat className="ml-[6px] w-[16px]"><path d="M1 1v14M5.5 1v14M10 1v14M15 1v14M1 1h14M1 5.5h14M1 10h14M1 15h14" stroke={B} /><path d="M8 5v6M5 8h6" stroke="#e81020" strokeWidth="2" /></Tool>
      <Sep className="ml-[6px]" />
      <Tool className="ml-[8px] w-[16px]"><path d="M1 15V5M1 15h15M3 13l4-4 3-6 4 2v8" stroke={O} strokeWidth="1.4" /><circle cx="11" cy="6" r="3" fill="#fbd0a0" stroke={O} /></Tool>
      <Tool className="ml-[5px] w-[17px]" vb="0 0 17 16"><rect x="3" y="3" width="9" height="11" fill="#38d0c8" stroke="#000" /><path d="M3 0v3M11 0v3M15 4v10" stroke="#000" /><rect x="0.5" y="11" width="5" height="4" fill="#f5d020" stroke="#000" /></Tool>
      <Tool className="ml-[6px] w-[16px]"><rect x="1" y="5" width="11" height="10" fill={O} /><path d="M4 2h8v4M14 4v8" stroke={O} /></Tool>
      <Tool className="ml-[5px] w-[16px]"><rect x="1" y="1" width="6" height="5" fill="#f5e860" /><path d="M3 3l10 11M14 2L4 14" stroke="#000" strokeWidth="1.5" /><path d="M6 12h9" stroke="#10a8e0" strokeWidth="1.5" /></Tool>
      <Tool className="ml-[8px] w-[16px]"><rect x="1" y="1" width="8" height="7" fill="#fbc090" /><path d="M8 8l6-7M2 10h6l2 4 5-5" stroke={O} strokeWidth="1.8" /></Tool>
      <Tool className="ml-[6px] w-[16px]"><rect x="2.5" y="1.5" width="13" height="13" fill={O} stroke={O} /><rect x="5" y="3" width="9" height="9" fill="#fff" strokeDasharray="1 1" stroke={O} /></Tool>
      <Sep className="ml-[3px]" />
      <Tool className="ml-[9px] w-[16px]"><path d="M1 1v14h14V1zM1 4h14M4 1v3M8 1v3M12 1v3M5 8h6l-2-2v5" stroke={O} strokeWidth="1.4" /></Tool>
      <Grip className="ml-[12px] mb-[8px]" />
      <Tool className="ml-[8px] w-[17px]" vb="0 0 17 16"><path d="M1 9l7-7 8 4-8 8z" fill="#d8f0f8" stroke={B} strokeWidth="1.3" /><path d="M1 9v3l7 3 8-7V6" stroke={B} strokeWidth="1.3" fill="#38b8e0" /></Tool>
      <Grip className="ml-[14px] mb-[8px]" />
      <Tool flat className="ml-[8px] w-[16px]"><circle cx="8" cy="8" r="7" stroke={G} strokeWidth="2" /><path d="M4 9c1-4 6-5 7-2s-3 4-4 2" stroke={G} strokeWidth="1.5" /></Tool>
      <Grip className="ml-[14px] mb-[8px]" />
      <Tool className="ml-[10px] w-[16px]"><circle cx="7" cy="3" r="2.5" stroke="#000" /><path d="M5 5v7h9M3 15h11M5 9h4" stroke="#000" strokeWidth="1.3" /></Tool>
      <Tool flat className="ml-[4px] w-[16px]"><path d="M1 15V6h14v9M8 0v3h7" stroke="#000" strokeWidth="1.2" /><path d="M8 3l2 3 3-1-2 3 3 2-4 0-2 4-1-4-4-1 3-2-1-3z" fill="#f02020" stroke="#f5d020" strokeWidth="0.7" /></Tool>
      <div className="ml-auto mr-[6px] w-[42px] h-[31px] relative shrink-0">
        <svg viewBox="0 0 42 20" className="absolute left-0 top-0 w-[42px] h-[20px]" fill="none">
          <path d="M10 1h10c3 0 2 4-5 7" stroke="#e01830" strokeWidth="1.6" />
          <path d="M24 8c-5 0-6 4-2 5s3 4-4 5" stroke="#f09010" strokeWidth="2" />
          <path d="M7 6h4c4 0 3 5-2 8l-8 5z" stroke="#3a2a90" strokeWidth="1.6" />
        </svg>
        <div className="absolute left-[10px] top-[19px] text-[10px] leading-[11px] font-bold italic text-[#3a2a90] font-['Liberation_Sans',sans-serif]">CATIA</div>
      </div>
    </div>
  )
}

function StatusBar() {
  return (
    <div className="h-[25px] shrink-0 flex items-center border-t-2 border-[#6f6f78] bg-[#cfd0e6]">
      <div className="ml-[3px] text-[10.2px] text-black">Select an object or a command</div>
      <div className="ml-auto w-[299px] h-[17px] bg-white border-2 border-[#85836f] border-r-white border-b-[#f0eee0]" />
      <div className="w-[32px] h-[21px] flex items-center justify-center bg-[#dcdbd6] border border-white border-r-[#777] border-b-[#777]">
        <svg viewBox="0 0 14 12" className="w-[14px] h-[12px]" fill="none"><rect x="1" y="1" width="7" height="6" stroke={G} /><path d="M12 1v9H1" stroke={G} /></svg>
      </div>
      <div className="ml-[2px] w-[34px] h-[21px] flex items-center justify-center bg-[#dcdbd6] border border-white border-r-[#777] border-b-[#777]">
        <svg viewBox="0 0 14 12" className="w-[14px] h-[12px]" fill="none"><circle cx="7" cy="5" r="4" stroke={G} /><path d="M7 3v4M1 10h12" stroke={G} /></svg>
      </div>
    </div>
  )
}

function Taskbar() {
  return (
    <div className="h-[32px] shrink-0 flex items-center bg-[linear-gradient(#2a62d8_0,#3f80ee_2px,#2a60dc_5px,#2257d6_26px,#1c48b8_32px)] text-white">
      <div className="w-[95px] h-full flex items-center pl-[10px] rounded-r-[8px] bg-[linear-gradient(#3a8f3a,#4fae4f_15%,#43a043_60%,#2f7f35)] shadow-[2px_0_3px_rgba(0,0,30,0.5)]">
        <svg viewBox="0 0 18 18" className="w-[18px] h-[18px]">
          <path d="M1 3l7-1v6H1z" fill="#e8502a" />
          <path d="M9 2l7-1v7H9z" fill="#7cc040" />
          <path d="M1 9h7v7l-7-1z" fill="#3a88e8" />
          <path d="M9 9h7v8l-7-1z" fill="#f5c020" />
        </svg>
        <span className="ml-[6px] text-[17px] leading-none font-bold italic font-['Liberation_Sans',sans-serif]">пуск</span>
      </div>
      <svg viewBox="0 0 18 18" className="ml-[12px] w-[18px] h-[18px]" fill="none">
        <circle cx="9" cy="9" r="6" stroke="#5cb4f4" strokeWidth="2.5" />
        <path d="M3.500 9.500h11" stroke="#5cb4f4" strokeWidth="2" />
        <path d="M14 12h3" stroke="#2257d6" strokeWidth="3" />
        <path d="M2 16C6 15 13 7 16 2" stroke="#e8f4ff" strokeWidth="1" />
      </svg>
      <svg viewBox="0 0 16 16" className="ml-[6px] w-[16px] h-[16px]">
        <rect x="1" y="2" width="13" height="13" rx="3" fill="#e8f0ff" stroke="#123a90" />
        <path d="M5 6l5-2-1 4 3 2-6 2z" fill="#2060d0" />
      </svg>
      <svg viewBox="0 0 16 16" className="ml-[7px] w-[16px] h-[16px]">
        <circle cx="8" cy="8" r="7.5" fill="#e87a18" />
        <circle cx="9" cy="7" r="4" fill="#2a4aa0" />
        <path d="M3 3c1 6 5 10 11 8" stroke="#f8c040" strokeWidth="2" fill="none" />
      </svg>
      <svg viewBox="0 0 8 7" className="ml-[11px] mb-[14px] w-[8px] h-[7px]" fill="none"><path d="M1 1l2.5 2.5L1 6M4.5 1L7 3.5 4.5 6" stroke="#cfe0ff" /></svg>
      <div className="ml-[8px] w-[160px] h-[25px] flex items-center pl-[10px] pt-px rounded-[2px] bg-[#1e52b8] shadow-[inset_1px_1px_1px_#123a88] text-[10.8px]">
        <Logo className="w-[16px] h-[16px] shrink-0" />
        <span className="ml-[4px] whitespace-nowrap">CATIA V5 - [Drawing1]</span>
      </div>
      <div className="ml-px w-[158px] h-[25px] flex items-center pl-[10px] pt-px rounded-[2px] bg-[#3c80f0] shadow-[inset_1px_1px_1px_#6aa0f8] text-[10.2px]">
        <svg viewBox="0 0 16 16" className="w-[16px] h-[16px] shrink-0" fill="none">
          <path d="M3 1l2 9" stroke="#e84030" strokeWidth="2" />
          <path d="M8 0v10" stroke="#f0c020" strokeWidth="2" />
          <path d="M13 1l-2 9" stroke="#40a040" strokeWidth="2" />
          <path d="M3 9h10l-1 6H4z" fill="#b08858" />
        </svg>
        <span className="ml-[2px] whitespace-nowrap">Безымянный - Paint</span>
      </div>
      <div className="ml-auto mr-[20px] h-[19px] w-[17px] flex items-center justify-center bg-[#3a6cc4] text-[10.5px]">EN</div>
      <div className="w-[74px] h-full flex items-center bg-[linear-gradient(#0a80d8_0,#18a0f0_3px,#1090e8_26px,#0c78cc_32px)] shadow-[inset_1px_0_1px_#0a4ca8] text-[10.5px]">
        <div className="-ml-[9px] w-[18px] h-[18px] shrink-0 rounded-full bg-[#2a68d8] border border-white flex items-center justify-center">
          <svg viewBox="0 0 8 10" className="w-[8px] h-[10px]" fill="none"><path d="M6 1L2 5l4 4" stroke="#fff" strokeWidth="2" /></svg>
        </div>
        <svg viewBox="0 0 15 15" className="ml-[3px] w-[15px] h-[15px] shrink-0">
          <rect width="13" height="14" fill="#fff" />
          <path d="M1 1h3v5l5-5h4L8 7l5 7H9L5 9l-1 1v4H1z" fill="#e81828" />
          <rect x="9" y="10" width="6" height="5" fill="#222" />
        </svg>
        <span className="ml-[7px]">18:36</span>
      </div>
    </div>
  )
}

export default function App() {
  return (
    <div className="w-[1280px] h-[1024px] flex flex-col overflow-hidden bg-[#6f7fd8] font-['Noto_Sans',sans-serif]">
      <TitleBar />
      <div className="flex-1 min-h-0 flex flex-col mx-[4px] mb-[2px] bg-[#cfd0e6]">
        <MenuBar />
        <div className="h-[76px] shrink-0 border-b-2 border-b-[#55555c] bg-[linear-gradient(#ffffff_0,#d8d8ea_6px,#cfd0e6_14px,#cfd0e6_64px,#9a9aaa_76px)]">
          <ToolRowOne />
          <ToolRowTwo />
        </div>
        <div className="h-[802px] shrink-0 flex bg-[#ebe8d8]">
          <TreePanel />
          <div className="w-[7px] shrink-0 border-l border-white border-r-2 border-r-[#222]" />
          <SheetArea />
          <RightBar />
        </div>
        <BottomTools />
        <StatusBar />
      </div>
      <Taskbar />
    </div>
  )
}
